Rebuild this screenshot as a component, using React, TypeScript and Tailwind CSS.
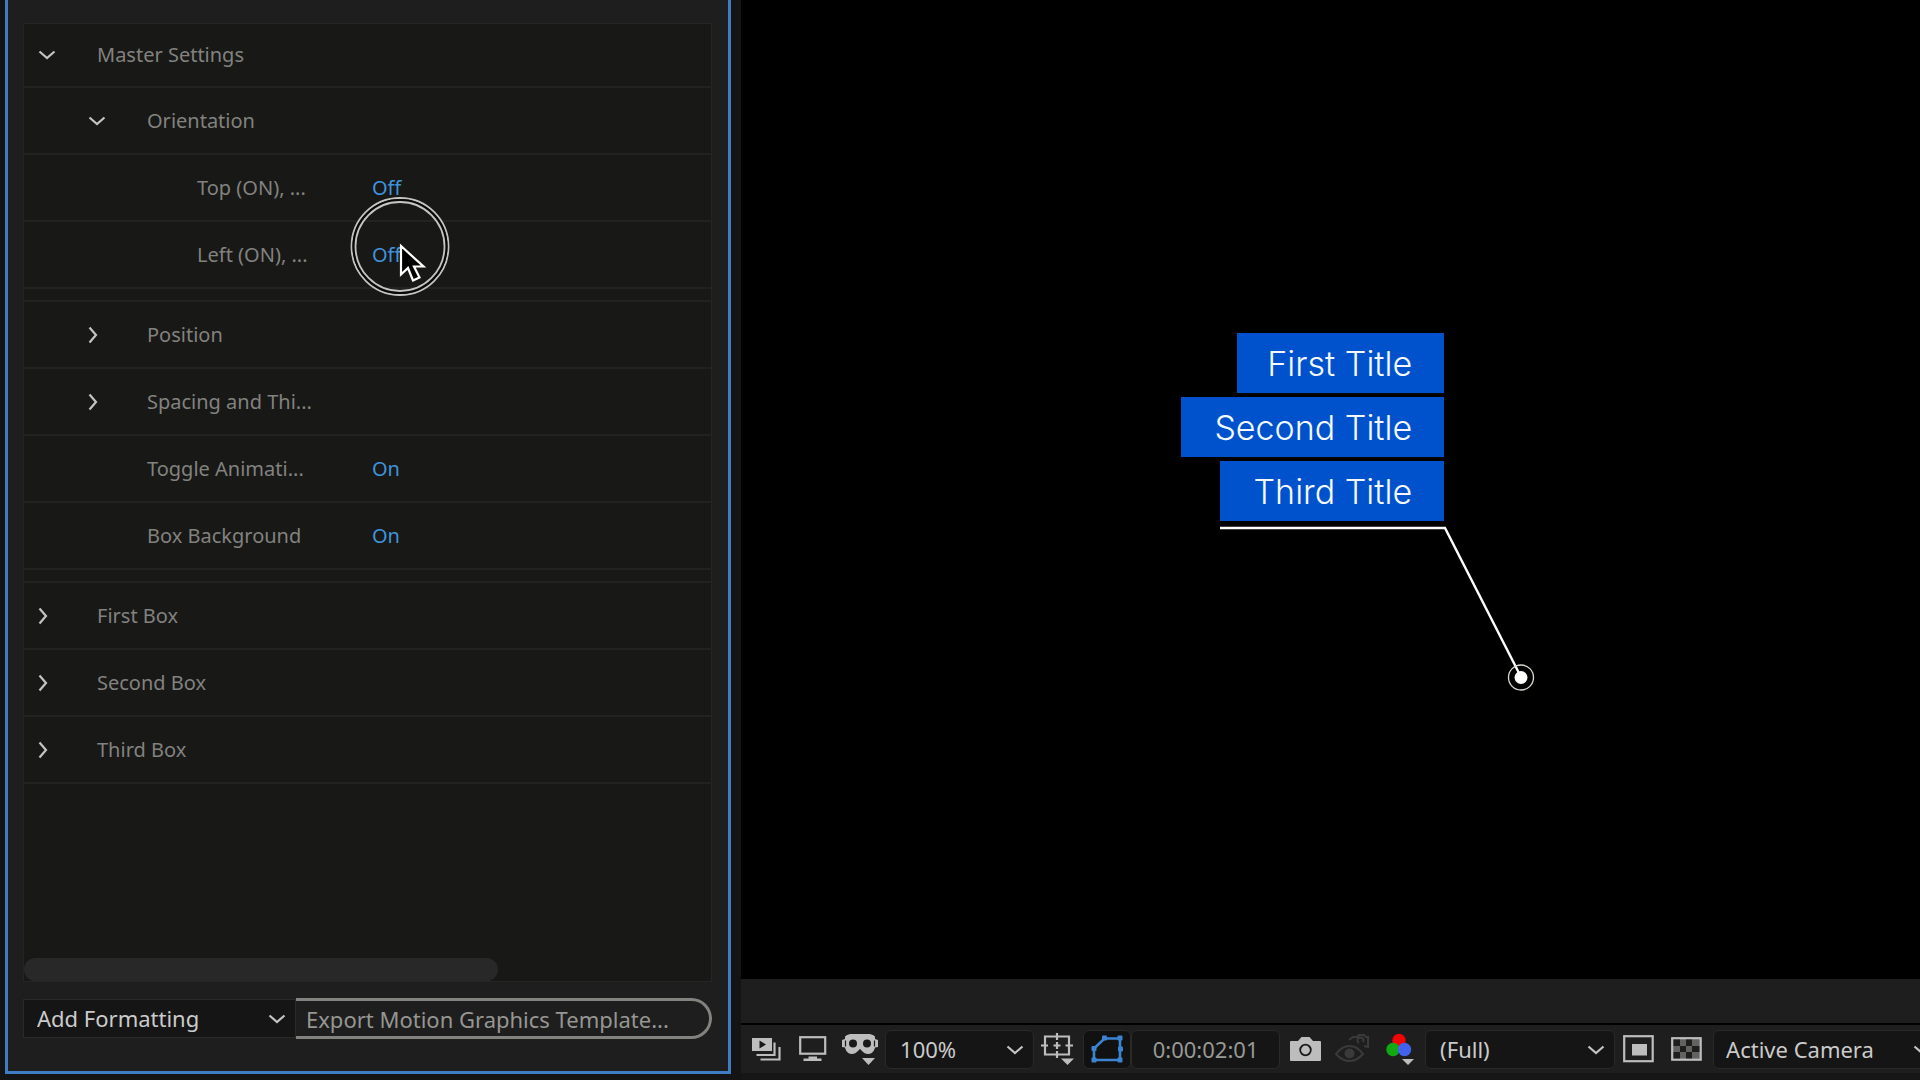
import { useState } from "react";
import type { ReactNode } from "react";

type Row = {
  label: string;
  level: 0 | 1 | 2;
  chevron?: "down" | "right";
  value?: "On" | "Off";
  spacerAfter?: boolean;
};

const rows: Row[] = [
  { label: "Master Settings", level: 0, chevron: "down" },
  { label: "Orientation", level: 1, chevron: "down" },
  { label: "Top (ON), ...", level: 2, value: "Off" },
  { label: "Left (ON), ...", level: 2, value: "Off", spacerAfter: true },
  { label: "Position", level: 1, chevron: "right" },
  { label: "Spacing and Thi...", level: 1, chevron: "right" },
  { label: "Toggle Animati...", level: 1, value: "On" },
  { label: "Box Background", level: 1, value: "On", spacerAfter: true },
  { label: "First Box", level: 0, chevron: "right" },
  { label: "Second Box", level: 0, chevron: "right" },
  { label: "Third Box", level: 0, chevron: "right" },
];

const indent = { 0: "pl-3.5", 1: "pl-16", 2: "pl-[114px]" };

function ChevronDown({ className = "" }: { className?: string }) {
  return (
    <svg className={className} width="18" height="10" viewBox="0 0 18 10" fill="none" stroke="#c4c4c4" strokeWidth="2.2" aria-hidden="true">
      <path d="M1.5 1.5 9 8 16.500 1.500" />
    </svg>
  );
}

function ChevronRight() {
  return (
    <svg width="10" height="18" viewBox="0 0 10 18" fill="none" stroke="#c4c4c4" strokeWidth="2.2" aria-hidden="true">
      <path d="M1.500 1.500 8 9 1.500 16.500" />
    </svg>
  );
}

function Toggle({ initial, label }: { initial: "On" | "Off"; label: string }) {
  const [value, setValue] = useState(initial);
  return (
    <button type="button" aria-label={`${label} ${value}`} className="text-[#3f94dc]" onClick={() => setValue(value === "On" ? "Off" : "On")}>
      {value}
    </button>
  );
}

function PropertyRow({ row, first }: { row: Row; first: boolean }) {
  return (
    <li className={row.spacerAfter ? "border-b-2 border-[#222220] pb-[11px]" : ""}>
      <div className={`flex items-center border-b-2 border-[#222221] text-xl ${first ? "h-16" : "h-[67px]"}`}>
        <div className={`w-[348px] shrink-0 ${indent[row.level]}`}>
          {row.chevron ? (
            <button type="button" aria-expanded={row.chevron === "down"} className="flex items-center">
              <span className="w-[59px] text-left">{row.chevron === "down" ? <ChevronDown /> : <ChevronRight />}</span>
              {row.label}
            </button>
          ) : (
            <span className="flex pl-[59px]">{row.label}</span>
          )}
        </div>
        {row.value && <Toggle initial={row.value} label={row.label} />}
      </div>
    </li>
  );
}

function Dropdown({ label, options, className, selectClass }: { label: string; options: string[]; className: string; selectClass: string }) {
  return (
    <div className={`relative h-[39px] shrink-0 ${className}`}>
      <select aria-label={label} className={`h-full w-full appearance-none border border-[#292929] bg-[#151515] text-[#cbcbcb] outline-none ${selectClass}`}>
        {options.map((o) => (
          <option key={o}>{o}</option>
        ))}
      </select>
      <ChevronDown className="pointer-events-none absolute right-2.5 top-[15px]" />
    </div>
  );
}

function IconButton({ label, className, children }: { label: string; className: string; children: ReactNode }) {
  return (
    <button type="button" aria-label={label} className={`flex h-[39px] shrink-0 items-center ${className}`}>
      {children}
    </button>
  );
}

function Pointer() {
  return (
    <svg className="pointer-events-none absolute left-[350px] top-[196px]" width="100" height="102" viewBox="0 0 100 102" fill="none" aria-hidden="true">
      <circle cx="50" cy="50.500" r="48.500" stroke="#c4c4c0" strokeWidth="1.800" />
      <circle cx="50" cy="50.500" r="46.500" stroke="#080808" strokeWidth="2" />
      <circle cx="50" cy="50.500" r="44.500" stroke="#c4c4c0" strokeWidth="1.800" />
      <path d="M51 50V78.500L58 72L63 84.500L69.500 81.500L64 70.500H73.500Z" fill="#000" stroke="#fff" strokeWidth="2.200" />
    </svg>
  );
}

function ControlsPanel() {
  return (
    <aside className="flex w-[38.6%] shrink-0 bg-[#141414] pb-1.5 pl-[5px] pr-2.5">
      <section className="flex min-w-0 flex-1 flex-col border-x-[3px] border-b-[3px] border-[#3e7cc4] bg-[#1e1e1e] pb-8 pl-[15px] pr-4 pt-[23px]">
        <div className="flex flex-1 flex-col justify-between border border-[#252525] bg-[#181817]">
          <ul className="text-[#82827f]">
            {rows.map((row, i) => (
              <PropertyRow key={row.label} row={row} first={i === 0} />
            ))}
          </ul>
          <div className="h-[23px] w-[69%] rounded-full bg-[#282828]" />
        </div>
        <div className="mt-4 flex items-center">
          <Dropdown
            label="Add formatting"
            options={["Add Formatting", "Add Group", "Add Comment"]}
            className="w-[273px]"
            selectClass="pl-[13px] text-[22px]"
          />
          <button
            type="button"
            className="h-[41px] flex-1 whitespace-nowrap rounded-r-full border-y-[3px] border-r-[3px] border-[#82827e] pl-2.5 text-left text-[22px] leading-8 text-[#969692]"
          >
            Export Motion Graphics Template...
          </button>
        </div>
      </section>
    </aside>
  );
}

function Callout() {
  const box = "flex h-[60px] items-center justify-end bg-[#0052cc] pr-8 whitespace-nowrap";
  return (
    <div className="absolute left-[440px] top-[333px] flex w-[263px] flex-col items-end gap-1 font-['Inter',sans-serif] text-[34px] font-light text-[#f4faff]">
      <div className={`w-[207px] ${box}`}>First Title</div>
      <div className={`w-[263px] ${box}`}>Second Title</div>
      <div className={`w-[224px] ${box}`}>Third Title</div>
      <svg className="absolute left-[39px] top-[192px]" width="320" height="170" viewBox="0 0 320 170" fill="none" aria-hidden="true">
        <path d="M0 3H225L301 152" stroke="#fff" strokeWidth="2.400" />
        <circle cx="301" cy="152.500" r="6.500" fill="#fff" />
        <circle cx="301" cy="152.500" r="12.500" stroke="#d8d8d0" strokeWidth="1.300" />
      </svg>
    </div>
  );
}

function ViewerToolbar() {
  return (
    <div className="flex h-[50px] items-center overflow-hidden border-t-2 border-black bg-[#1e1e1e] pl-[11px] text-[22px] text-[#c4c4c4]">
      <IconButton label="Always preview this view" className="w-[47px]">
        <svg width="30" height="26" viewBox="0 0 30 26" fill="none" aria-hidden="true">
          <path d="M0 2H20V15H0Z" fill="#bdbdbd" />
          <path d="M7.500 4.500V12.500L14 8.500Z" fill="#181818" />
          <path d="M22.500 6.500V19H4.500M27.500 11V23.500H8.500" stroke="#bdbdbd" strokeWidth="2.200" />
        </svg>
      </IconButton>
      <IconButton label="Primary viewer" className="w-[43px]">
        <svg width="28" height="26" viewBox="0 0 28 26" fill="none" aria-hidden="true">
          <rect x="1.200" y="1.200" width="25" height="16.500" stroke="#bdbdbd" strokeWidth="2.200" />
          <path d="M9.500 20.500H18V22.500H22.500V25H4.500V22.500H9.500Z" fill="#bdbdbd" />
        </svg>
      </IconButton>
      <IconButton label="View options" className="w-[43px]">
        <svg width="36" height="32" viewBox="0 0 36 32" fill="none" aria-hidden="true">
          <path d="M3 3.500C5 1.500 8 1 10 1H26C28 1 31 1.500 33 3.500V6L36 7V14L33 14.500C32 19 29 21 26 21C22 21 20.500 18 18 16C15.500 18 14 21 10 21C7 21 4 19 3 14.500L0 14V7L3 6Z" fill="#bdbdbd" />
          <circle cx="11" cy="10.500" r="4" fill="#181818" />
          <circle cx="25" cy="10.500" r="4" fill="#181818" />
          <path d="M3.500 7.500V13.500M32.500 7.500V13.500" stroke="#181818" strokeWidth="1.200" />
          <path d="M20 25H33L26.500 32Z" fill="#bdbdbd" />
        </svg>
      </IconButton>
      <Dropdown label="Magnification" options={["100%", "50%", "200%"]} className="w-[149px]" selectClass="rounded-md pl-3.5" />
      <IconButton label="Grid and guide options" className="w-[49px] pl-[7px]">
        <svg width="34" height="32" viewBox="0 0 34 32" fill="none" stroke="#bdbdbd" strokeWidth="2.200" aria-hidden="true">
          <path d="M4 3.500H28V21.500H4ZM16 0V7M16 18V25M0 12.500H7M24.500 12.500H32M12.500 12.500H19.500M16 9V16" />
          <path d="M20 25.500H33L26.500 32Z" fill="#bdbdbd" stroke="none" />
        </svg>
      </IconButton>
      <IconButton label="Toggle mask and shape path visibility" className="w-12 justify-center rounded-md border border-[#292929] bg-[#111111]">
        <svg width="32" height="28" viewBox="0 0 32 28" fill="none" aria-hidden="true">
          <path d="M3 25V13.500L13.500 3.500H29V25Z" stroke="#3d84d0" strokeWidth="2.600" />
          <g fill="#3d84d0">
            <rect x="0.500" y="22.500" width="5" height="5" rx="1" />
            <rect x="0.500" y="11" width="5" height="5" rx="1" />
            <rect x="11" y="0.500" width="5" height="5" rx="1" />
            <rect x="26.500" y="0.500" width="5" height="5" rx="1" />
            <rect x="27" y="11.500" width="5" height="5" rx="1" />
            <rect x="26.500" y="22.500" width="5" height="5" rx="1" />
          </g>
        </svg>
      </IconButton>
      <button type="button" className="h-[39px] w-[149px] shrink-0 rounded-md border border-[#292929] bg-[#151515] text-[#999996]">
        0:00:02:01
      </button>
      <IconButton label="Take snapshot" className="w-[55px] pl-2.5">
        <svg width="31" height="26" viewBox="0 0 31 26" fill="none" aria-hidden="true">
          <path d="M1 5H8L11.500 1H19.500L23 5H30Q31 5 31 6V24Q31 25 30 25H1Q0 25 0 24V6Q0 5 1 5Z" fill="#bdbdbd" />
          <circle cx="15.500" cy="14" r="5.300" fill="#bdbdbd" stroke="#1a1a1a" strokeWidth="1.800" />
        </svg>
      </IconButton>
      <IconButton label="Show snapshot" className="w-[51px]">
        <svg width="34" height="30" viewBox="0 0 34 30" fill="none" stroke="#3a3a3a" strokeWidth="2" aria-hidden="true">
          <path d="M1 20Q7 12 14.500 12T28 20Q22 27 14.500 27T1 20Z" />
          <circle cx="14.500" cy="19.500" r="4" fill="#3a3a3a" />
          <path d="M14 6L18 3H22L24 1H29L31 3H33V13L29 12M24 9A3 3 0 1 1 28 8" />
        </svg>
      </IconButton>
      <IconButton label="Show channel" className="w-[39px]">
        <svg width="29" height="32" viewBox="0 0 29 32" aria-hidden="true">
          <circle cx="13" cy="7.500" r="6.700" fill="#f00505" />
          <circle cx="7" cy="16.500" r="6.700" fill="#12a812" />
          <circle cx="18.500" cy="16.500" r="6.700" fill="#4262ee" />
          <path d="M16 26H28L22 32Z" fill="#bdbdbd" />
        </svg>
      </IconButton>
      <Dropdown label="Resolution" options={["(Full)", "(Half)", "(Quarter)"]} className="w-[190px]" selectClass="rounded-md pl-3.5" />
      <IconButton label="Region of interest" className="w-14 pl-2">
        <svg width="31" height="28" viewBox="0 0 31 28" fill="none" aria-hidden="true">
          <rect x="1.200" y="1.200" width="28.500" height="25" stroke="#bdbdbd" strokeWidth="2.200" />
          <rect x="9" y="9" width="15" height="11.500" fill="#bdbdbd" />
        </svg>
      </IconButton>
      <IconButton label="Toggle transparency grid" className="w-[42px]">
        <svg width="31" height="24" viewBox="0 0 31 24" fill="none" aria-hidden="true">
          <path d="M9 2H15V9H9ZM21 2H29V9H21ZM2 9H9V15H2ZM15 9H21V15H15ZM9 15H15V22H9ZM21 15H29V22H21Z" fill="#626260" />
          <rect x="1.200" y="1.200" width="28.500" height="21.500" stroke="#bdbdbd" strokeWidth="2.200" />
        </svg>
      </IconButton>
      <Dropdown label="3D view" options={["Active Camera", "Front", "Left", "Top"]} className="w-[228px]" selectClass="rounded-md pl-3" />
    </div>
  );
}

export default function App() {
  return (
    <main className="relative flex h-screen overflow-hidden bg-black font-['Noto_Sans',sans-serif]">
      <ControlsPanel />
      <section className="flex min-w-0 flex-1 flex-col bg-[#161616] pb-[7px]">
        <div className="relative flex-1 bg-black">
          <Callout />
        </div>
        <div className="h-11 bg-[#1e1e1e]" />
        <ViewerToolbar />
      </section>
      <Pointer />
    </main>
  );
}
